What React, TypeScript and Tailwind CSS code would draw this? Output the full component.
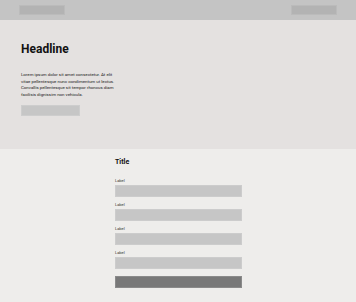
export default function App() {
  const fields = ["Label", "Label", "Label", "Label"];
  return (
    <div className="w-[356px] h-[302px] overflow-hidden font-['Roboto',sans-serif] text-[#111]">
      {/* top bar */}
      <header className="h-5 bg-[#c4c4c4] flex items-center justify-between px-[19px]">
        <div className="w-[46px] h-[10px] bg-[#b3b3b3] border border-[#bbbbbb]" />
        <div className="w-[46px] h-[10px] bg-[#b3b3b3] border border-[#bbbbbb]" />
      </header>

      {/* hero */}
      <section className="h-[129px] bg-[#e4e1e0] pl-[21px] pt-[23px]">
        <h1 className="text-[12px] leading-[12px] font-bold">Headline</h1>
        <p className="mt-[17px] text-[4.4px] leading-[6.5px] text-[#222]">
          Lorem ipsum dolor sit amet consectetur. At elit
          <br />
          vitae pellentesque nunc condimentum ut lectus.
          <br />
          Convallis pellentesque sit tempor rhoncus diam
          <br />
          facilisis dignissim non vehicula.
        </p>
        <div className="mt-[7px] w-[59px] h-[11px] bg-[#c6c6c6] border border-[#cdcdcd]" />
      </section>

      {/* form */}
      <section className="h-[153px] bg-[#eeedeb] pl-[115px] pt-[9px]">
        <div className="w-[127px] flex flex-col">
          <h2 className="text-[7px] leading-[9px] font-bold">Title</h2>
          <div className="mt-[11px] flex flex-col gap-[5px]">
            {fields.map((f, i) => (
              <div key={i} className="flex flex-col">
                <span className="text-[4px] leading-[5px] text-[#333]">{f}</span>
                <div className="mt-[2px] h-[12px] bg-[#c6c6c6] border border-[#cccccc]" />
              </div>
            ))}
          </div>
          <div className="mt-[7px] h-[12px] bg-[#787878] border border-[#8a8a8a]" />
        </div>
      </section>
    </div>
  );
}
